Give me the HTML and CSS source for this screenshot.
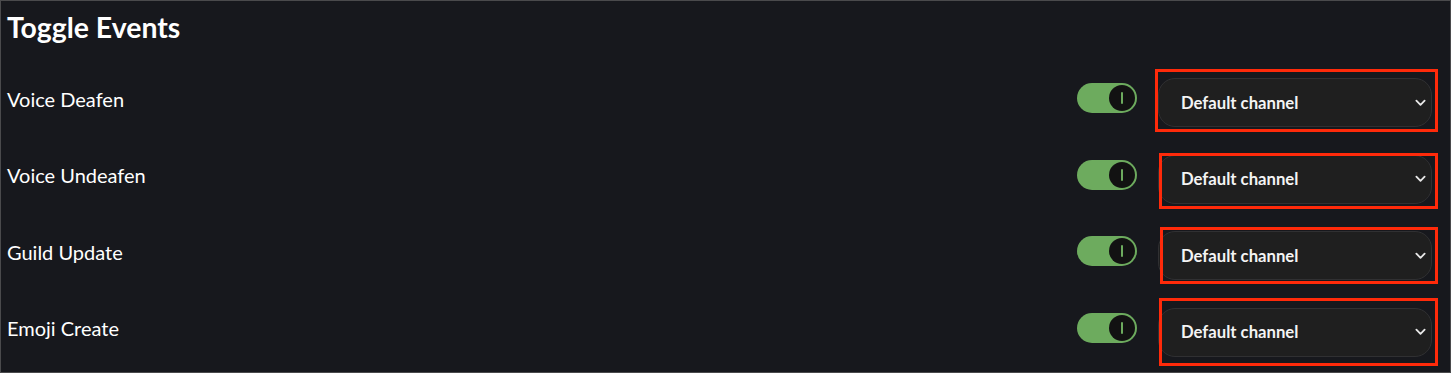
FILE: index.html
```html
<!DOCTYPE html>
<html>
<head>
<meta charset="utf-8">
<link rel="stylesheet" href="styles.css">
</head>
<body>
<div class="panel">
  <h1 class="title">Toggle Events</h1>
  <div class="rows">
    <div class="row">
      <span class="label">Voice Deafen</span>
      <div class="controls">
        <span class="toggle"><span class="knob"><span class="bar"></span></span></span>
        <div class="select"><span>Default channel</span><svg class="chev" viewBox="0 0 12 8" width="12" height="8"><path d="M1.5 1.5 L6 6 L10.5 1.5" fill="none" stroke="#e8e8e8" stroke-width="2" stroke-linecap="round" stroke-linejoin="round"/></svg></div>
      </div>
      <span class="mark mark-1"></span>
    </div>
    <div class="row">
      <span class="label">Voice Undeafen</span>
      <div class="controls">
        <span class="toggle"><span class="knob"><span class="bar"></span></span></span>
        <div class="select"><span>Default channel</span><svg class="chev" viewBox="0 0 12 8" width="12" height="8"><path d="M1.5 1.5 L6 6 L10.5 1.5" fill="none" stroke="#e8e8e8" stroke-width="2" stroke-linecap="round" stroke-linejoin="round"/></svg></div>
      </div>
      <span class="mark mark-2"></span>
    </div>
    <div class="row">
      <span class="label">Guild Update</span>
      <div class="controls">
        <span class="toggle"><span class="knob"><span class="bar"></span></span></span>
        <div class="select"><span>Default channel</span><svg class="chev" viewBox="0 0 12 8" width="12" height="8"><path d="M1.5 1.5 L6 6 L10.5 1.5" fill="none" stroke="#e8e8e8" stroke-width="2" stroke-linecap="round" stroke-linejoin="round"/></svg></div>
      </div>
      <span class="mark mark-3"></span>
    </div>
    <div class="row">
      <span class="label">Emoji Create</span>
      <div class="controls">
        <span class="toggle"><span class="knob"><span class="bar"></span></span></span>
        <div class="select"><span>Default channel</span><svg class="chev" viewBox="0 0 12 8" width="12" height="8"><path d="M1.5 1.5 L6 6 L10.5 1.5" fill="none" stroke="#e8e8e8" stroke-width="2" stroke-linecap="round" stroke-linejoin="round"/></svg></div>
      </div>
      <span class="mark mark-4"></span>
    </div>
  </div>
</div>
</body>
</html>
```

FILE: styles.css
```css
* { box-sizing: border-box; }
html, body { margin: 0; padding: 0; background: #17181d; }
body { font-family: Lato, "Noto Sans", sans-serif; color: #ffffff; }

.panel {
  width: 1451px;
  height: 373px;
  border: 1px solid #4a4a4c;
  background: #17181d;
  padding: 0 18px 0 6px;
  overflow: hidden;
}

.title {
  margin: 0;
  height: 59px;
  padding-top: 9px;
  font-size: 28.4px;
  font-weight: 700;
  line-height: 34px;
}

.rows {
  display: grid;
  grid-auto-rows: 76.5px;
}

.row {
  position: relative;
  display: flex;
  align-items: center;
  justify-content: space-between;
}

.label {
  font-size: 20px;
  line-height: 24px;
  padding-top: 1px;
}

.controls {
  display: flex;
  align-items: center;
  gap: 21px;
}

.toggle {
  width: 60px;
  height: 30px;
  border-radius: 15px;
  background: #6dab5e;
  display: flex;
  align-items: center;
  justify-content: flex-end;
  padding-right: 2px;
}

.knob {
  width: 26px;
  height: 26px;
  border-radius: 50%;
  background: #121212;
  display: flex;
  align-items: center;
  justify-content: center;
}

.bar {
  width: 2px;
  height: 12px;
  background: #6dab5e;
  border-radius: 1px;
}

.select {
  width: 274px;
  height: 49px;
  margin-top: 9px;
  border: 1px solid #303032;
  border-radius: 17px;
  background: #1f1f1f;
  display: flex;
  align-items: center;
  justify-content: space-between;
  padding: 0 5px 0 22px;
  font-size: 16.7px;
  font-weight: 700;
  color: #f4f4f4;
}

.chev { display: block; width: 11px; height: 8px; }

.mark {
  position: absolute;
  border: 3px solid #ff2a0a;
  pointer-events: none;
}
.mark-1 { left: 1148px; right: -6px; top: 9px; height: 63px; }
.mark-2 { left: 1152px; right: -6px; top: 16.5px; height: 56px; }
.mark-3 { left: 1153px; right: -6px; top: 14px; height: 57px; }
.mark-4 { left: 1152px; right: -6px; top: 8.5px; height: 68px; }
```
